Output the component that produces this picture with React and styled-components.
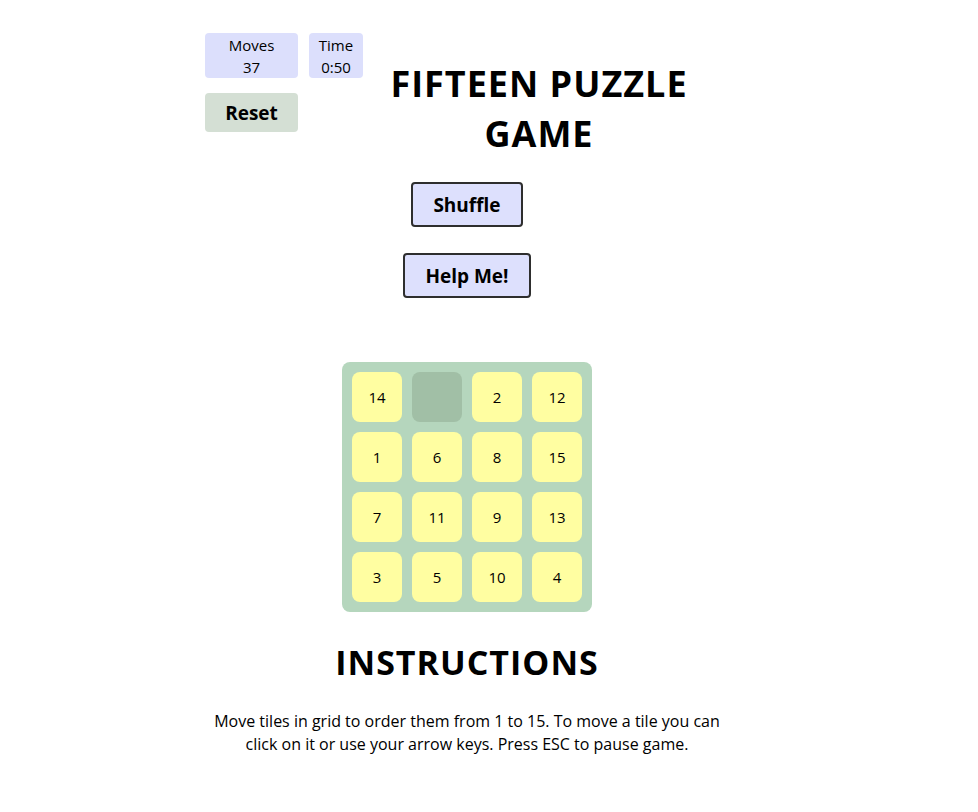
import React, { useState } from "react";
import styled, { createGlobalStyle } from "styled-components";

const GlobalStyle = createGlobalStyle`
  body {
    margin: 8px;
    background: #ffffff;
    font-family: "Comic Sans MS", "Open Sans", sans-serif;
    color: #000;
  }
`;

const START = [14, 0, 2, 12, 1, 6, 8, 15, 7, 11, 9, 13, 3, 5, 10, 4];

function App() {
  const [tiles, setTiles] = useState(START);
  const [moves, setMoves] = useState(37);

  const handleTile = (i) => {
    const empty = tiles.indexOf(0);
    const r1 = Math.floor(i / 4), c1 = i % 4;
    const r2 = Math.floor(empty / 4), c2 = empty % 4;
    if (Math.abs(r1 - r2) + Math.abs(c1 - c2) !== 1) return;
    const next = [...tiles];
    next[empty] = tiles[i];
    next[i] = 0;
    setTiles(next);
    setMoves(moves + 1);
  };

  const shuffle = () => {
    const next = [...tiles].sort(() => Math.random() - 0.5);
    setTiles(next);
    setMoves(0);
  };

  return (
    <Page>
      <GlobalStyle />
      <Header>
        <Controls>
          <StatRow>
            <Stat wide>
              Moves
              <br />
              {moves}
            </Stat>
            <Stat>
              Time
              <br />
              0:50
            </Stat>
          </StatRow>
          <ResetButton onClick={() => { setTiles(START); setMoves(0); }}>Reset</ResetButton>
        </Controls>
        <Title>FIFTEEN PUZZLE GAME</Title>
      </Header>

      <Actions>
        <ActionButton onClick={shuffle}>Shuffle</ActionButton>
        <ActionButton>Help Me!</ActionButton>
      </Actions>

      <Board>
        {tiles.map((n, i) => (
          <Tile key={i} empty={n === 0} onClick={() => handleTile(i)}>
            {n || ""}
          </Tile>
        ))}
      </Board>

      <Heading>INSTRUCTIONS</Heading>
      <Text>
        Move tiles in grid to order them from 1 to 15. To move a tile you can
        click on it or use your arrow keys. Press ESC to pause game.
      </Text>
    </Page>
  );
}

export default App;

const Page = styled.div`
  width: 524px;
  margin-left: 197px;
  padding-top: 25px;
  display: flex;
  flex-direction: column;
  align-items: center;
`;

const Header = styled.div`
  width: 100%;
  display: flex;
  align-items: flex-start;
`;

const Controls = styled.div`
  display: flex;
  flex-direction: column;
  gap: 15px;
`;

const StatRow = styled.div`
  display: flex;
  gap: 11px;
`;

const Stat = styled.div`
  width: ${(props) => (props.wide ? "93px" : "54px")};
  height: 45px;
  box-sizing: border-box;
  padding-top: 1px;
  background: #dcdffc;
  border-radius: 4px;
  text-align: center;
  font-size: 15px;
  line-height: 22px;
`;

const ResetButton = styled.button`
  width: 93px;
  height: 39px;
  border: none;
  border-radius: 4px;
  background: #d4dfd4;
  font-family: inherit;
  font-weight: bold;
  font-size: 19px;
  color: #000;
  cursor: pointer;
`;

const Title = styled.h1`
  flex: 1;
  margin: 26px 14px 0 0;
  padding: 0 8px;
  text-align: center;
  font-size: 36px;
  line-height: 50px;
  letter-spacing: 1px;
  font-weight: bold;
`;

const Actions = styled.div`
  margin-top: 23px;
  display: flex;
  flex-direction: column;
  align-items: center;
  gap: 26px;
`;

const ActionButton = styled.button`
  height: 45px;
  padding: 0 20px;
  background: #dde0fd;
  border: 2px solid #2e2e2e;
  border-radius: 4px;
  font-family: inherit;
  font-weight: bold;
  font-size: 19px;
  color: #000;
  cursor: pointer;
`;

const Board = styled.div`
  margin-top: 64px;
  width: 250px;
  height: 250px;
  box-sizing: border-box;
  padding: 10px;
  display: grid;
  grid-template-columns: repeat(4, 50px);
  grid-template-rows: repeat(4, 50px);
  gap: 10px;
  background: #b5d6bd;
  border-radius: 8px;
`;

const Tile = styled.div`
  display: flex;
  align-items: center;
  justify-content: center;
  border-radius: 8px;
  background: ${(props) => (props.empty ? "#a1bfa6" : "#fffea1")};
  font-size: 15px;
  cursor: pointer;
`;

const Heading = styled.h2`
  margin: 30px 0 0;
  font-size: 34px;
  line-height: 40px;
  letter-spacing: 1px;
  font-weight: bold;
`;

const Text = styled.p`
  max-width: 510px;
  margin: 28px 0 0;
  text-align: center;
  font-size: 16px;
  line-height: 23px;
`;
